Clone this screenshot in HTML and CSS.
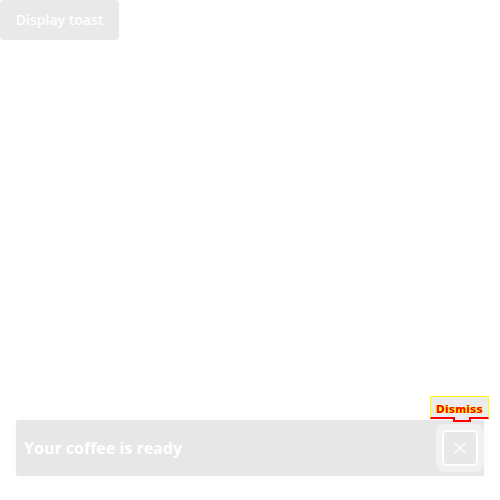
FILE: index.html
```html
<!DOCTYPE html>
<html>
<head>
<meta charset="utf-8">
<link rel="stylesheet" href="styles.css">
</head>
<body>
<button class="trigger">Display toast</button>
<div class="toast">
  <span class="message">Your coffee is ready</span>
  <div class="close-wrap">
    <div class="tooltip">Dismiss</div>
    <button class="close" aria-label="Dismiss">
      <svg width="14" height="14" viewBox="0 0 14 14"><path d="M1.5 1.5 L12.5 12.5 M12.5 1.5 L1.5 12.5" stroke="#fff" stroke-width="1.4" fill="none"/></svg>
    </button>
  </div>
</div>
</body>
</html>
```
FILE: styles.css
```css
html, body {
  margin: 0;
  padding: 0;
  width: 500px;
  height: 500px;
  background: #ffffff;
  font-family: "Open Sans", "Liberation Sans", sans-serif;
}
body {
  position: relative;
}
.trigger {
  display: block;
  margin: 0;
  width: 119px;
  height: 40px;
  border: none;
  border-radius: 4px;
  background: #e9e9e9;
  color: #ffffff;
  font-family: "Open Sans", sans-serif;
  font-weight: 600;
  font-size: 14px;
  padding: 0 0 2px 0;
}
.toast {
  position: absolute;
  left: 16px;
  top: 420px;
  width: 468px;
  height: 56px;
  box-sizing: border-box;
  background: #e7e7e7;
  border-radius: 2px;
  box-shadow: 0 0 10px rgba(0,0,0,0.03);
  display: flex;
  align-items: center;
  justify-content: space-between;
  padding: 0 0 0 8px;
}
.message {
  color: #ffffff;
  font-weight: 700;
  font-size: 16px;
}
.close-wrap {
  position: relative;
  width: 48px;
  height: 48px;
  display: flex;
  align-items: center;
  justify-content: center;
  background: #f1f1f1;
  border-radius: 8px;
}
.close {
  width: 36px;
  height: 36px;
  box-sizing: border-box;
  border: 2px solid #ffffff;
  border-radius: 5px;
  background: #e8e8e8;
  display: flex;
  align-items: center;
  justify-content: center;
  padding: 0;
}
.tooltip {
  position: absolute;
  left: -6px;
  top: -28px;
  width: 59px;
  height: 23px;
  box-sizing: border-box;
  background: #ececec;
  border-top: 1px solid #ffff00;
  border-left: 1px solid #ffff00;
  border-right: 1px solid #ffff00;
  border-bottom: 2px solid #ff0000;
  color: #ff0000;
  font-family: "DejaVu Sans", sans-serif;
  font-weight: 700;
  font-size: 10.5px;
  text-align: center;
  line-height: 24px;
  letter-spacing: 0.2px;
  text-shadow: 1px 0 0 #ffff00, -1px 0 0 #ffff00;
}
.tooltip::after {
  content: "";
  position: absolute;
  left: 22px;
  bottom: -5px;
  width: 14px;
  height: 3px;
  background: #ececec;
  border: 2px solid #ff0000;
  border-top: none;
}
```
